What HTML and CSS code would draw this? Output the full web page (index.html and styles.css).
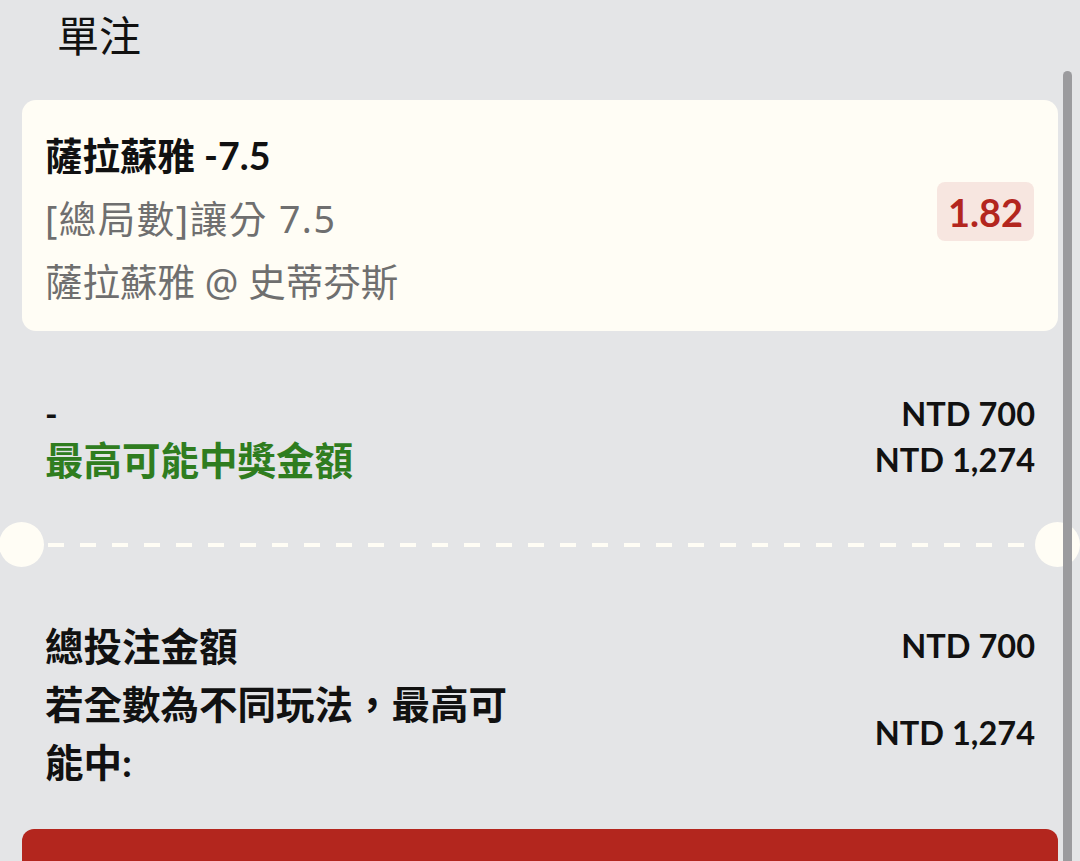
FILE: index.html
```html
<!DOCTYPE html>
<html lang="zh-Hant">

<head>
    <meta charset="UTF-8">
    <meta name="viewport" content="width=device-width, initial-scale=1.0">
    <title>單注</title>

    <link rel="stylesheet" href="styles.css">
</head>

<body>

    <h1 class="title">單注</h1>

    <div class="slip">
        <div class="bet-card">
            <div class="bet-info">
                <div class="bet-pick">薩拉蘇雅 -7.5</div>
                <div class="bet-market">[總局數]讓分 7.5</div>
                <div class="bet-match">薩拉蘇雅 @ 史蒂芬斯</div>
            </div>
            <div class="odds">1.82</div>
        </div>

        <div class="stake">
            <div class="row">
                <span class="dash-label">-</span>
                <span class="amount">NTD 700</span>
            </div>
            <div class="row">
                <span class="win-label">最高可能中獎金額</span>
                <span class="amount">NTD 1,274</span>
            </div>
        </div>
    </div>

    <div class="divider">
        <span class="notch"></span>
        <span class="dashes"></span>
        <span class="notch"></span>
    </div>

    <div class="slip">
        <div class="totals">
            <div class="row">
                <span class="total-label">總投注金額</span>
                <span class="amount">NTD 700</span>
            </div>
            <div class="row">
                <span class="total-label wrap">若全數為不同玩法，最高可能中:</span>
                <span class="amount">NTD 1,274</span>
            </div>
        </div>

        <button class="place-bet"></button>
    </div>

    <div class="scrollbar"></div>

</body>

</html>
```

FILE: styles.css
```css
body {
    font-family: Lato, "Noto Sans CJK TC", sans-serif;
    background-color: #e4e5e7;
    color: #111111;
    margin: 0;
    padding: 0;
    overflow: hidden;
}

.title {
    font-size: 42px;
    font-weight: normal;
    line-height: 60px;
    margin: 0 0 34px;
    padding: 6px 0 0 57px;
}

.slip {
    padding: 0 22px;
}

.bet-card {
    display: flex;
    justify-content: space-between;
    align-items: center;
    height: 231px;
    box-sizing: border-box;
    padding: 24px 24px 18px 23px;
    background-color: #fffdf5;
    border-radius: 14px;
}

.bet-info {
    font-size: 38px;
    line-height: 63px;
    color: #6f6f6f;
}

.bet-pick {
    font-size: 37.5px;
    font-weight: bold;
    color: #111111;
}

.bet-market,
.bet-match {
    font-family: "Noto Sans", "Noto Sans CJK TC", sans-serif;
    font-size: 37.5px;
}

.bet-market {
    letter-spacing: 1.5px;
}

.odds {
    display: flex;
    align-items: center;
    justify-content: center;
    width: 97px;
    height: 59px;
    margin-top: -14px;
    border-radius: 8px;
    background-color: #f7e6e0;
    color: #b3261e;
    font-size: 38px;
    font-weight: bold;
}

.stake {
    padding: 60px 23px 0;
}

.row {
    display: flex;
    justify-content: space-between;
    align-items: center;
}

.stake .row {
    line-height: 46px;
}

.dash-label {
    font-size: 34px;
    font-weight: bold;
}

.win-label {
    font-size: 38.5px;
    font-weight: bold;
    color: #2f7d1f;
}

.amount {
    font-size: 32.5px;
    font-weight: bold;
}

.divider {
    display: flex;
    align-items: center;
    margin-top: 39px;
    margin-left: -1px;
}

.notch {
    flex: 0 0 45px;
    height: 45px;
    border-radius: 50%;
    background-color: #fffdf5;
}

.dashes {
    flex: 1;
    height: 4px;
    margin: 0 5px 0 4px;
    background: repeating-linear-gradient(90deg, #fffdf5 0 16px, transparent 16px 32px);
}

.totals {
    padding: 50px 23px 0;
}

.totals .row {
    line-height: 58px;
}

.total-label {
    font-size: 38.5px;
    font-weight: bold;
}

.wrap {
    max-width: 480px;
}

.place-bet {
    display: block;
    width: 100%;
    height: 100px;
    margin-top: 38px;
    border: none;
    border-radius: 12px;
    background-color: #b3261e;
}

.scrollbar {
    position: fixed;
    top: 71px;
    right: 8px;
    width: 9px;
    bottom: 0;
    border-radius: 5px 5px 0 0;
    background-color: #9b9b9e;
}
```
